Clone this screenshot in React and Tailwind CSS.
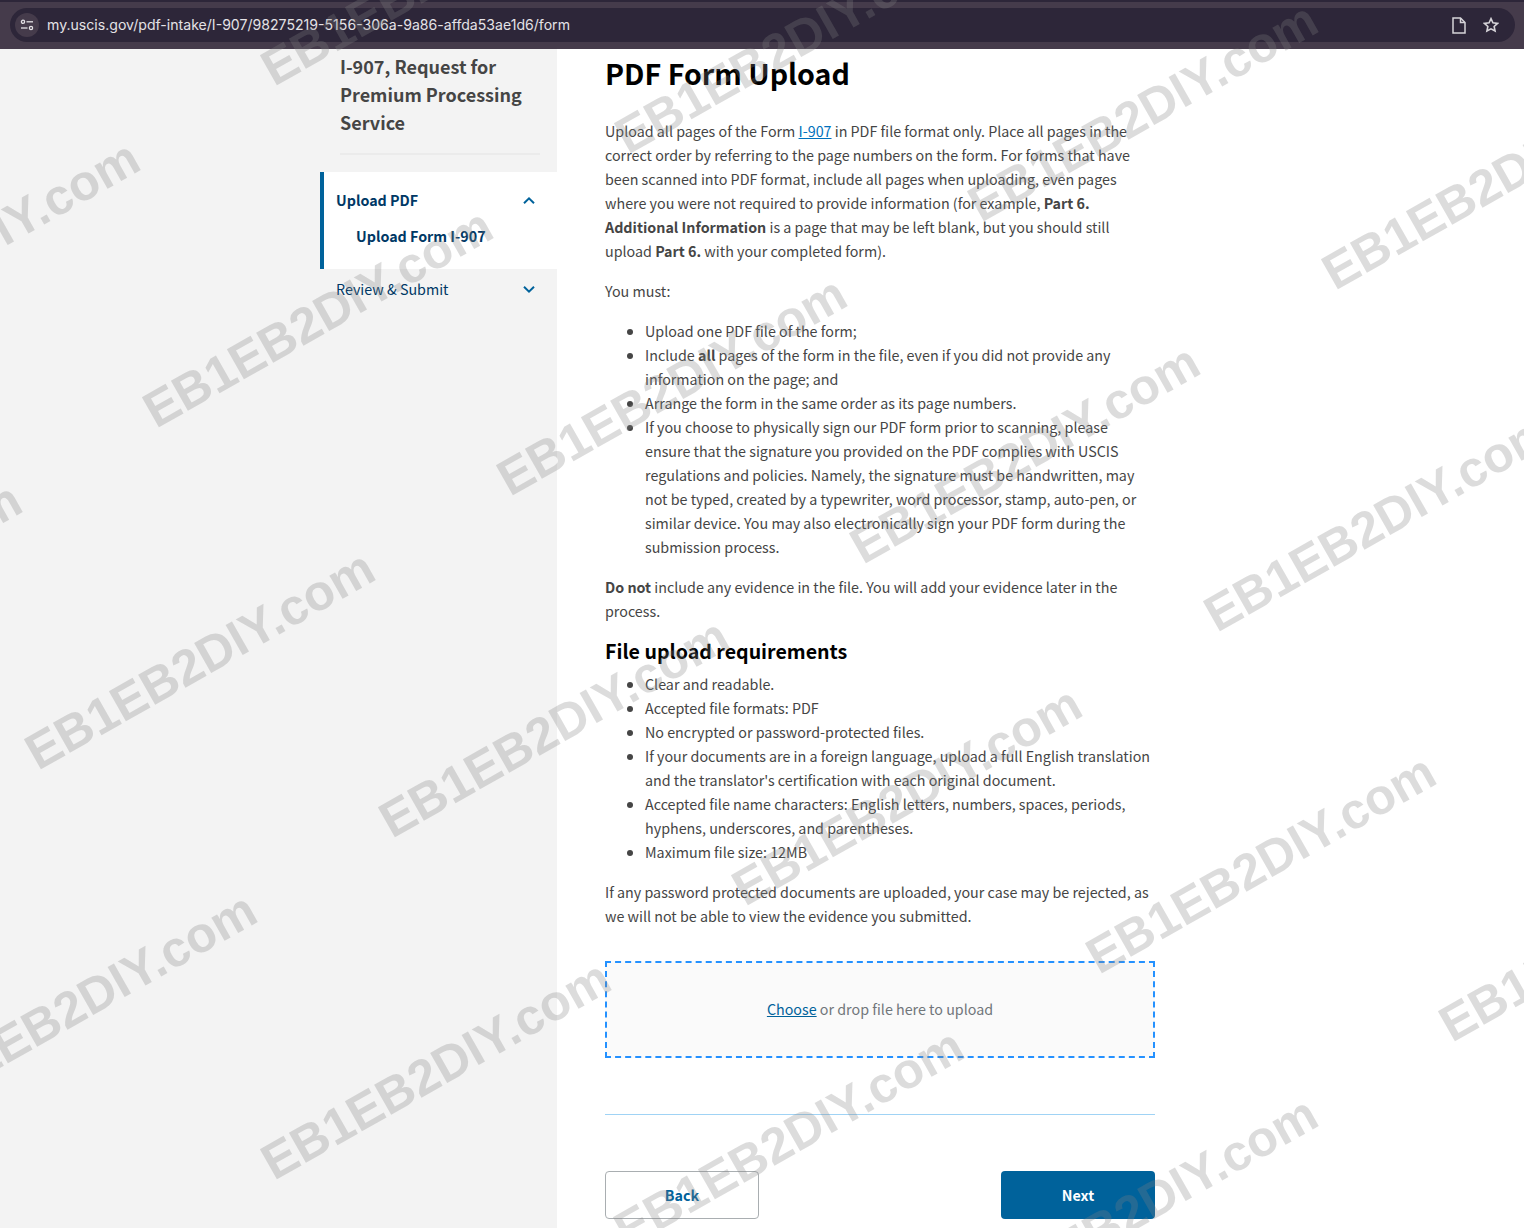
import React from "react";

// watermark grid, baseline start of each label
const marks = [];
for (let row = -3; row < 3; row++) {
  for (let col = -2; col < 6; col++) {
    const x = 42 + col * 353.5 - row * 118;
    const y = 778 + col * 68 + row * 342;
    if (x < 1524 && y > 0 && y < 1500 && x > -420) marks.push({ x, y });
  }
}

function Chevron({ up }) {
  return (
    <svg width="14" height="9" viewBox="0 0 14 9" fill="none" className="shrink-0">
      <path
        d={up ? "M2 7.2 L7 2.4 L12 7.2" : "M2 1.8 L7 6.6 L12 1.8"}
        stroke="#00629b"
        strokeWidth="2"
      />
    </svg>
  );
}

function TopBar() {
  return (
    <div className="h-[49px] bg-[#453b4b] border-t-2 border-[#2d2639] pt-[6px] pl-[10px] pr-[9px] shrink-0">
      <div className="h-[34px] rounded-full bg-[#2d2639] flex items-center pr-[16px]">
        <div className="w-[24px] h-[24px] ml-[5px] rounded-full bg-[#453b4b] flex items-center justify-center">
          <svg width="14" height="12" viewBox="0 0 14 12" fill="none" stroke="#e4e2e6" strokeWidth="1.3">
            <circle cx="3" cy="2.8" r="1.6" />
            <path d="M6.5 2.8 H13" />
            <path d="M1 9 H7.5" />
            <circle cx="11" cy="9" r="1.6" />
          </svg>
        </div>
        <span className="ml-[8px] text-[14.1px] text-[#e4e2e6] font-['Inter',sans-serif]">
          my.uscis.gov/pdf-intake/I-907/98275219-5156-306a-9a86-affda53ae1d6/form
        </span>
        <div className="ml-auto flex items-center gap-[17px]">
          <svg width="14" height="17" viewBox="0 0 14 17" fill="none" stroke="#d5d3d8" strokeWidth="1.5">
            <path d="M1 1 H8.5 L13 5.5 V16 H1 Z" />
            <path d="M8.5 1 V5.5 H13" />
          </svg>
          <svg width="16" height="16" viewBox="0 0 24 24" fill="none" stroke="#d5d3d8" strokeWidth="2.4">
            <path d="M12 2.5 L14.9 8.8 L21.8 9.6 L16.7 14.3 L18.1 21.1 L12 17.7 L5.9 21.1 L7.3 14.3 L2.2 9.6 L9.1 8.8 Z" />
          </svg>
        </div>
      </div>
    </div>
  );
}

function Sidebar() {
  return (
    <div className="w-[557px] shrink-0 bg-[#f3f3f3] pl-[320px]">
      <div className="pl-[20px] pr-[17px] pt-[3px] pb-[17px]">
        <div className="text-[18px] leading-[28px] font-bold text-[#454545] pb-[17px] border-b-2 border-[#ebebeb]">
          I-907, Request for
          <br />
          Premium Processing
          <br />
          Service
        </div>
      </div>
      <div className="bg-white border-l-4 border-[#00629b] h-[97px] pl-[12px] pr-[21px] pt-[16px]">
        <div className="flex items-center justify-between h-[24px] font-bold text-[#003865]">
          Upload PDF
          <Chevron up />
        </div>
        <div className="mt-[12px] ml-[20px] h-[24px] leading-[24px] font-bold text-[#003865]">Upload Form I-907</div>
      </div>
      <div className="flex items-center justify-between h-[24px] mt-[8px] pl-[16px] pr-[21px] text-[#003865]">
        Review &amp; Submit
        <Chevron />
      </div>
    </div>
  );
}

function Main() {
  return (
    <div className="pl-[48px] w-[598px] text-[#454545]">
      <h1 className="text-[28.6px] leading-[40px] font-bold text-black mt-[4px] mb-[26px]">PDF Form Upload</h1>
      <p className="mb-[16px]">
        Upload all pages of the Form <a className="underline text-[#0071bc]">I-907</a> in PDF file format only. Place
        all pages in the correct order by referring to the page numbers on the form. For forms that have been scanned
        into PDF format, include all pages when uploading, even pages where you were not required to provide
        information (for example, <b>Part 6. Additional Information</b> is a page that may be left blank, but you
        should still upload <b>Part 6.</b> with your completed form).
      </p>
      <p className="mb-[16px]">You must:</p>
      <ul className="list-disc pl-[40px] mb-[16px]">
        <li>Upload one PDF file of the form;</li>
        <li>
          Include <b>all</b> pages of the form in the file, even if you did not provide any information on the page; and
        </li>
        <li>Arrange the form in the same order as its page numbers.</li>
        <li>
          If you choose to physically sign our PDF form prior to scanning, please ensure that the signature you provided
          on the PDF complies with USCIS regulations and policies. Namely, the signature must be handwritten, may not be
          typed, created by a typewriter, word processor, stamp, auto-pen, or similar device. You may also
          electronically sign your PDF form during the submission process.
        </li>
      </ul>
      <p className="mb-[12px]">
        <b>Do not</b> include any evidence in the file. You will add your evidence later in the process.
      </p>
      <h2 className="text-[19.6px] leading-[32px] font-bold text-black mb-[5px]">File upload requirements</h2>
      <ul className="list-disc pl-[40px] mb-[16px]">
        <li>Clear and readable.</li>
        <li>Accepted file formats: PDF</li>
        <li>No encrypted or password-protected files.</li>
        <li>
          If your documents are in a foreign language, upload a full English translation and the translator's
          certification with each original document.
        </li>
        <li>Accepted file name characters: English letters, numbers, spaces, periods, hyphens, underscores, and parentheses.</li>
        <li>Maximum file size: 12MB</li>
      </ul>
      <p className="mb-[33px]">
        If any password protected documents are uploaded, your case may be rejected, as we will not be able to view the
        evidence you submitted.
      </p>
      <div className="h-[97px] pb-[2px] border-2 border-dashed border-[#2491ff] bg-[#fafafa] flex items-center justify-center text-[#71767a]">
        <span>
          <a className="underline text-[#00629b]">Choose</a> or drop file here to upload
        </span>
      </div>
      <div className="mt-[56px] border-t border-[#a0d3f5]" />
      <div className="mt-[56px] flex justify-between">
        <button className="w-[154px] h-[48px] rounded-[4px] border border-[#a9aeb1] font-bold text-[#00629b]">Back</button>
        <button className="w-[154px] h-[48px] rounded-[4px] bg-[#00629b] font-bold text-white">Next</button>
      </div>
    </div>
  );
}

export default function App() {
  return (
    <div className="relative h-[1228px] overflow-hidden bg-white flex flex-col text-[14.3px] leading-[24px] font-['Noto_Sans_CJK_SC','Source_Sans_Pro',sans-serif]">
      <TopBar />
      <div className="flex flex-1 min-h-0">
        <Sidebar />
        <Main />
      </div>
      <div className="absolute inset-0 pointer-events-none overflow-hidden">
        {marks.map((m) => (
          <div
            key={m.x + "-" + m.y}
            className="absolute whitespace-nowrap origin-[0_100%] rotate-[-29.5deg] text-[50.3px] leading-none font-bold text-[#80808047] font-['Liberation_Sans',sans-serif]"
            style={{ left: m.x, top: m.y - 50.3 }}
          >
            EB1EB2DIY.com
          </div>
        ))}
      </div>
    </div>
  );
}
